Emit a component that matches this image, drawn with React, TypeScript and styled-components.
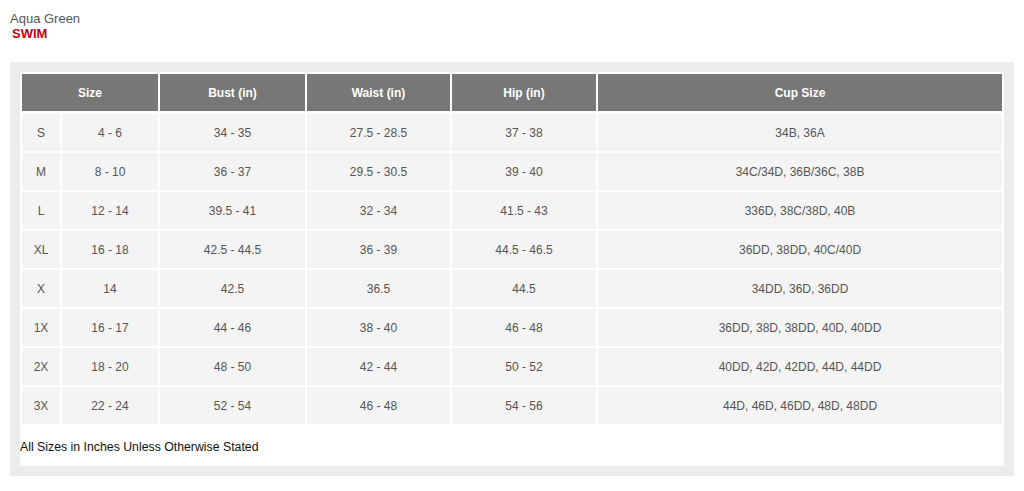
import React from "react";
import styled, { createGlobalStyle } from "styled-components";

const Global = createGlobalStyle`
  html, body { margin: 0; padding: 0; background: #ffffff; }
  body { font-family: Arial, "Liberation Sans", sans-serif; font-size: 12px; }
`;

const Page = styled.div`
  padding: 11px 10px 0 10px;
  width: 1024px;
  box-sizing: border-box;
`;

const Brand = styled.div`
  color: #555555;
  font-size: 13px;
  line-height: 15px;
`;

const Category = styled.div`
  color: #c4000f;
  font-size: 13px;
  font-weight: bold;
  line-height: 15px;
  margin-left: 2px;
`;

const Frame = styled.div`
  margin-top: 21px;
  width: 1004px;
  box-sizing: border-box;
  background: #ececec;
  padding: 10px;
`;

const Sheet = styled.div`
  background: #ffffff;
  padding: 0 0 12px 0;
  overflow: hidden;
`;

const Table = styled.table`
  border-collapse: separate;
  border-spacing: 2px;
  table-layout: fixed;
  width: 984px;
`;

const HeadCell = styled.th`
  background: #777777;
  color: #ffffff;
  font-weight: bold;
  font-size: 12px;
  height: 38px;
  padding: 0;
  text-align: center;
  box-shadow: inset 0 -1px 0 #ffffff;
`;

const Cell = styled.td`
  background: #f4f4f4;
  color: #555555;
  font-size: 12px;
  height: 37px;
  padding: 0;
  text-align: center;
`;

const Note = styled.div`
  color: #111111;
  font-size: 12.3px;
  line-height: 14px;
  padding-top: 14px;
`;

const rows: string[][] = [
  ["S", "4 - 6", "34 - 35", "27.5 - 28.5", "37 - 38", "34B, 36A"],
  ["M", "8 - 10", "36 - 37", "29.5 - 30.5", "39 - 40", "34C/34D, 36B/36C, 38B"],
  ["L", "12 - 14", "39.5 - 41", "32 - 34", "41.5 - 43", "336D, 38C/38D, 40B"],
  ["XL", "16 - 18", "42.5 - 44.5", "36 - 39", "44.5 - 46.5", "36DD, 38DD, 40C/40D"],
  ["X", "14", "42.5", "36.5", "44.5", "34DD, 36D, 36DD"],
  ["1X", "16 - 17", "44 - 46", "38 - 40", "46 - 48", "36DD, 38D, 38DD, 40D, 40DD"],
  ["2X", "18 - 20", "48 - 50", "42 - 44", "50 - 52", "40DD, 42D, 42DD, 44D, 44DD"],
  ["3X", "22 - 24", "52 - 54", "46 - 48", "54 - 56", "44D, 46D, 46DD, 48D, 48DD"],
];

const widths = [38, 96, 145, 143, 144, 404];

export default function App() {
  return (
    <>
      <Global />
      <Page>
        <Brand>Aqua Green</Brand>
        <Category>SWIM</Category>
        <Frame>
          <Sheet>
            <Table>
              <colgroup>
                {widths.map((w, i) => (
                  <col key={i} style={{ width: w }} />
                ))}
              </colgroup>
              <thead>
                <tr>
                  <HeadCell colSpan={2}>Size</HeadCell>
                  <HeadCell>Bust (in)</HeadCell>
                  <HeadCell>Waist (in)</HeadCell>
                  <HeadCell>Hip (in)</HeadCell>
                  <HeadCell>Cup Size</HeadCell>
                </tr>
              </thead>
              <tbody>
                {rows.map((r) => (
                  <tr key={r[0]}>
                    {r.map((c, i) => (
                      <Cell key={i}>{c}</Cell>
                    ))}
                  </tr>
                ))}
              </tbody>
            </Table>
            <Note>All Sizes in Inches Unless Otherwise Stated</Note>
          </Sheet>
        </Frame>
      </Page>
    </>
  );
}
